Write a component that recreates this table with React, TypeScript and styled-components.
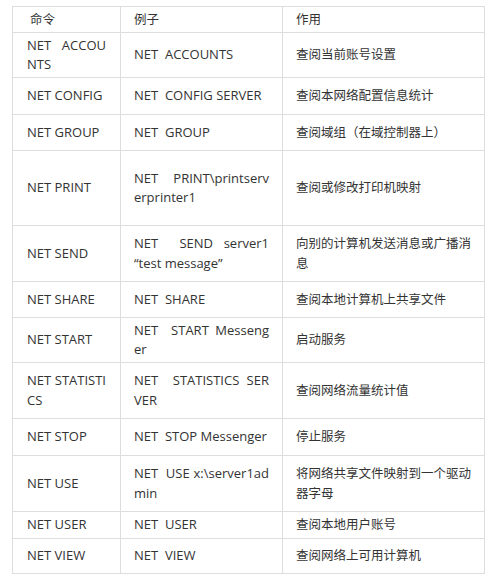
import React from "react";
import styled, { createGlobalStyle } from "styled-components";

const GlobalStyle = createGlobalStyle`
  html, body {
    margin: 0;
    padding: 0;
    background: #ffffff;
  }
  body {
    font-family: "Open Sans", "Noto Sans CJK SC", sans-serif;
  }
`;

const Page = styled.div`
  padding: 6px 0 0 12px;
  width: 492px;
  height: 585px;
  box-sizing: border-box;
  background: #ffffff;
`;

const Table = styled.table`
  border-collapse: collapse;
  table-layout: fixed;
  width: 472px;
  font-family: "Open Sans", "Noto Sans CJK SC", sans-serif;
  font-size: 12.5px;
  line-height: 19.5px;
  color: #333333;
`;

const Row = styled.tr<{ $h: number }>`
  height: ${(p) => p.$h}px;
`;

const Cell = styled.td<{ $pl: number; $indent?: number; $latin?: boolean }>`
  border: 1px solid #dddddd;
  padding: 0 ${(p) => p.$pl}px 0 ${(p) => p.$pl + (p.$indent || 0)}px;
  vertical-align: middle;
  text-align: justify;
  overflow-wrap: anywhere;
  font-size: ${(p) => (p.$latin ? "13px" : "12.5px")};
`;

type RowData = { h: number; cmd: string; ex: string; use: string };

const Z = "\u200B";

const rows: RowData[] = [
  { h: 45, cmd: `NET\u00a0 ACCOU${Z}NTS`, ex: "NET\u00a0 ACCOUNTS", use: "查阅当前账号设置" },
  { h: 37, cmd: "NET CONFIG", ex: "NET\u00a0 CONFIG SERVER", use: "查阅本网络配置信息统计" },
  { h: 36, cmd: "NET GROUP", ex: "NET\u00a0 GROUP", use: "查阅域组（在域控制器上）" },
  { h: 75, cmd: "NET PRINT", ex: `NET\u00a0 PRINT\\printserv${Z}erprinter1`, use: "查阅或修改打印机映射" },
  { h: 56, cmd: "NET SEND", ex: "NET\u00a0 SEND server1 “test message”", use: "向别的计算机发送消息或广播消息" },
  { h: 36, cmd: "NET SHARE", ex: "NET\u00a0 SHARE", use: "查阅本地计算机上共享文件" },
  { h: 45, cmd: "NET START", ex: `NET\u00a0 START Messeng${Z}er`, use: "启动服务" },
  { h: 56, cmd: `NET STATISTI${Z}CS`, ex: `NET\u00a0 STATISTICS SER${Z}VER`, use: "查阅网络流量统计值" },
  { h: 37, cmd: "NET STOP", ex: "NET\u00a0 STOP Messenger", use: "停止服务" },
  { h: 56, cmd: "NET USE", ex: `NET\u00a0 USE x:\\server1ad${Z}min`, use: "将网络共享文件映射到一个驱动器字母" },
  { h: 27, cmd: "NET USER", ex: "NET\u00a0 USER", use: "查阅本地用户账号" },
  { h: 35, cmd: "NET VIEW", ex: "NET\u00a0 VIEW", use: "查阅网络上可用计算机" },
];

export default function App() {
  return (
    <Page>
      <GlobalStyle />
      <Table>
        <colgroup>
          <col style={{ width: 108 }} />
          <col style={{ width: 162 }} />
          <col style={{ width: 202 }} />
        </colgroup>
        <tbody>
          <Row $h={26}>
            <Cell $pl={14} $indent={3}>命令</Cell>
            <Cell $pl={13}>例子</Cell>
            <Cell $pl={13}>作用</Cell>
          </Row>
          {rows.map((r) => (
            <Row key={r.cmd} $h={r.h}>
              <Cell $pl={14} $latin>{r.cmd}</Cell>
              <Cell $pl={13} $latin>{r.ex}</Cell>
              <Cell $pl={13}>{r.use}</Cell>
            </Row>
          ))}
        </tbody>
      </Table>
    </Page>
  );
}
